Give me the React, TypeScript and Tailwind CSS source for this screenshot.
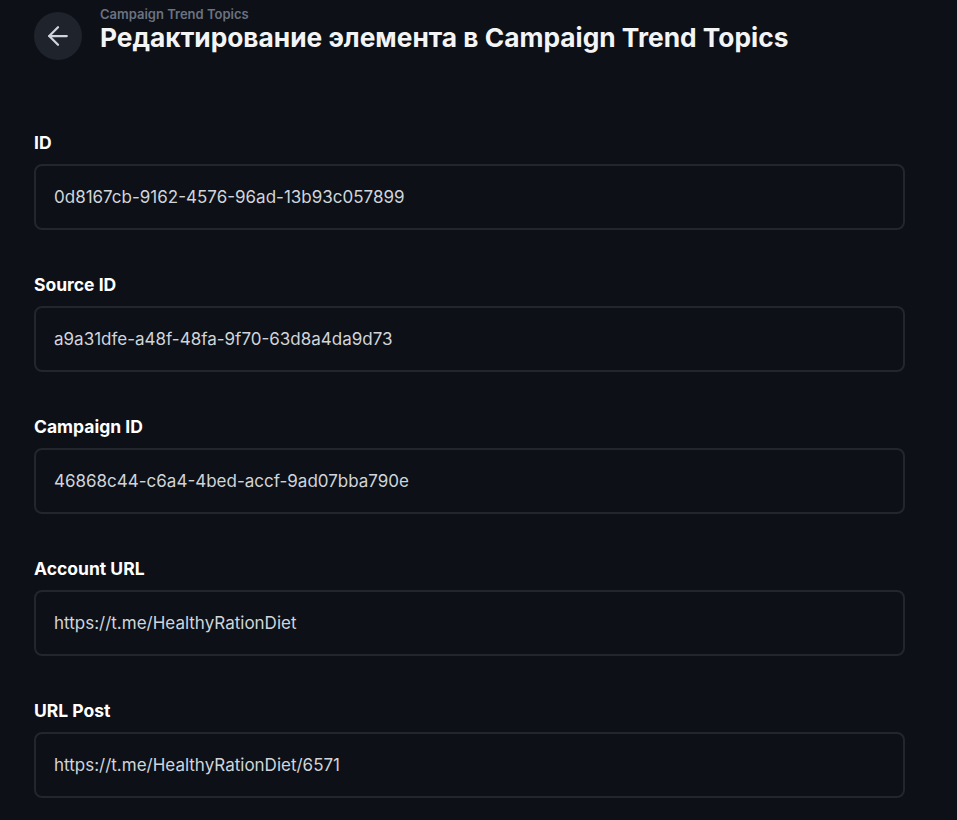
import React from 'react';
import { ArrowLeft } from 'lucide-react';

const FIELDS = [
  { label: 'ID', value: '0d8167cb-9162-4576-96ad-13b93c057899' },
  { label: 'Source ID', value: 'a9a31dfe-a48f-48fa-9f70-63d8a4da9d73' },
  { label: 'Campaign ID', value: '46868c44-c6a4-4bed-accf-9ad07bba790e' },
  { label: 'Account URL', value: 'https://t.me/HealthyRationDiet' },
  { label: 'URL Post', value: 'https://t.me/HealthyRationDiet/6571' },
];

export default function App() {
  return (
    <div
      className="min-h-screen bg-[#0d1017] px-[34px] pt-[6px] pb-10"
      style={{ fontFamily: 'Inter, "Noto Sans", sans-serif' }}
    >
      {/* Header */}
      <div className="flex items-start gap-[18px]">
        <button className="mt-[6px] flex h-12 w-12 shrink-0 items-center justify-center rounded-full bg-[#1f232b] text-[#d1d5db]">
          <ArrowLeft size={30} strokeWidth={1.8} />
        </button>
        <div className="flex flex-col">
          <span className="text-[13px] leading-4 font-semibold text-[#6b7280]">Campaign Trend Topics</span>
          <h1 className="text-[26.3px] leading-8 font-bold text-[#f3f4f6]">
            Редактирование элемента в Campaign Trend Topics
          </h1>
        </div>
      </div>

      {/* Form */}
      <div className="mt-[71px] flex w-[871px] flex-col gap-[43px]">
        {FIELDS.map((f) => (
          <div key={f.label} className="flex flex-col">
            <label className="mb-[9px] block h-6 text-[17.5px] leading-6 font-bold text-white">{f.label}</label>
            <input
              readOnly
              value={f.value}
              className="h-[66px] w-full rounded-lg border-2 border-[#22262e] bg-[#0d1017] px-[18px] text-[17px] text-[#d1d5db] outline-none"
            />
          </div>
        ))}
      </div>
    </div>
  );
}
